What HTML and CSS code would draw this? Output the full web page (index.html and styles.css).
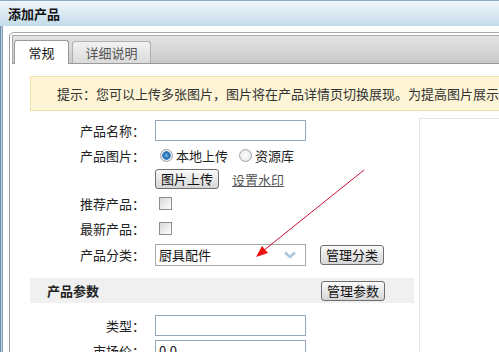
FILE: index.html
```html
<!DOCTYPE html>
<html>
<head>
<meta charset="UTF-8">
    <title>添加产品</title>
    <link rel="stylesheet" href="styles.css">
</head>
<body>
    <div class="dialog">
        <div class="dialog_title">添加产品</div>
        <div class="dialog_body">
            <div class="tabPanel">
                <ul class="tabBar">
                    <li class="tab tab_on">常规</li>
                    <li class="tab">详细说明</li>
                </ul>
                <div class="tabContent">
                    <div class="tip">提示：您可以上传多张图片，图片将在产品详情页切换展现。为提高图片展示效果，建议上传尺寸一致的图片。</div>
                    <div class="main">
                        <div class="form">
                            <div class="row row1">
                                <span class="label">产品名称：</span>
                                <span class="field"><input type="text" class="txt" /></span>
                            </div>
                            <div class="row row2">
                                <span class="label">产品图片：</span>
                                <span class="field">
                                    <i class="radio radio_on"></i><span class="opt">本地上传</span>
                                    <i class="radio"></i><span class="opt">资源库</span>
                                </span>
                            </div>
                            <div class="row row3">
                                <span class="label"></span>
                                <span class="field">
                                    <span class="btn">图片上传</span>
                                    <a class="link" href="#">设置水印</a>
                                </span>
                            </div>
                            <div class="row row4">
                                <span class="label">推荐产品：</span>
                                <span class="field"><i class="check"></i></span>
                            </div>
                            <div class="row row5">
                                <span class="label">最新产品：</span>
                                <span class="field"><i class="check"></i></span>
                            </div>
                            <div class="row row6">
                                <span class="label">产品分类：</span>
                                <span class="field">
                                    <span class="select">厨具配件
                                        <svg class="chevron" width="12" height="8" viewBox="0 0 12 8"><path d="M1 1.5 L6 6 L11 1.5" fill="none" stroke="#a8c6de" stroke-width="2.6"/></svg>
                                    </span>
                                    <span class="btn btn_cat">管理分类</span>
                                </span>
                            </div>
                            <div class="section">
                                <span>产品参数</span>
                                <span class="btn">管理参数</span>
                            </div>
                            <div class="row row7">
                                <span class="label">类型：</span>
                                <span class="field"><input type="text" class="txt" /></span>
                            </div>
                            <div class="row row8">
                                <span class="label">市场价：</span>
                                <span class="field"><input type="text" class="txt" value="0.0" /></span>
                            </div>
                        </div>
                        <div class="side"></div>
                    </div>
                </div>
            </div>
        </div>
        <svg class="arrow" width="499" height="352" viewBox="0 0 499 352">
            <line x1="364" y1="170" x2="263" y2="251" stroke="#cc1133" stroke-width="1"/>
            <polygon points="256,257 262,246 268,253" fill="#ee1111"/>
        </svg>
    </div>
</body>
</html>
```

FILE: styles.css
```css
@charset "utf-8";
/* reset */
body, div, ul, li, span, input {padding: 0; margin: 0;}
ul {list-style: none;}
body {
    font: 13px/1 "Noto Sans CJK SC", "DejaVu Sans", sans-serif;
    color: #222;
    background: #fff;
    overflow: hidden;
}

.dialog {
    position: relative;
    width: 760px;
    height: 352px;
    overflow: hidden;
}

.dialog_title {
    height: 25px;
    line-height: 25px;
    padding-left: 8px;
    font-weight: bold;
    color: #111;
    border-top: 1px solid #88abc4;
    background: linear-gradient(#f1f5f9, #c3dcea);
}

.dialog_body {
    height: 330px;
    padding: 6px 0 0 9px;
    box-shadow: inset 1px 0 #6f8ea8, inset 2px 0 #bccfde, inset 3px 0 #86a3bb;
}

.tabPanel {
    height: 320px;
    border-top: 1px solid #a4abb0;
    border-left: 1px solid #9a9a9a;
    border-top-left-radius: 5px;
    padding: 2px 0 0 2px;
}

    .tabBar {
        display: flex;
        align-items: flex-end;
        height: 27px;
        padding-left: 1px;
        border-top: 1px solid #ababab;
        border-left: 1px solid #a8a8a8;
        border-bottom: 1px solid #999;
        background: linear-gradient(#e3e3e3, #c9c9c9);
    }

        .tab {
            width: 77px;
            height: 21px;
            line-height: 21px;
            margin-left: 3px;
            text-align: center;
            color: #555;
            border: 1px solid #b0b0b0;
            border-bottom: 0;
            border-radius: 3px 3px 0 0;
            background: linear-gradient(#f2f2f2, #dadada);
        }

        .tab_on {
            width: 53px;
            height: 23px;
            line-height: 23px;
            margin: 0 0 -1px 0;
            color: #111;
            border-color: #999;
            background: #fff;
        }

.tabContent {
    margin-left: -2px;
    padding-left: 20px;
    background: #fff;
}

.tip {
    margin-top: 12px;
    height: 33px;
    line-height: 33px;
    padding-left: 26px;
    color: #333;
    white-space: nowrap;
    overflow: hidden;
    border: 1px solid #f1e1a6;
    background: #fdf5d6;
}

.main {
    display: flex;
    margin-top: 7px;
}

.form {
    width: 384px;
}

    .row {
        display: flex;
        align-items: center;
        height: 25px;
    }

    .row2, .row3, .row5 { height: 24px; }
    .row6 { height: 29px; }
    .row7 { height: 26px; margin-top: 9px; }

    .label {
        width: 115px;
        text-align: right;
    }

    .field {
        display: flex;
        align-items: center;
        margin-left: 10px;
    }

    .txt {
        box-sizing: border-box;
        width: 151px;
        height: 21px;
        padding: 0 3px;
        border: 1px solid #93a6ba;
        font: 13px "Noto Sans CJK SC", "DejaVu Sans", sans-serif;
        color: #111;
        outline: none;
    }

    .radio {
        box-sizing: border-box;
        width: 13px;
        height: 13px;
        margin: 0 3px 0 5px;
        border: 1px solid #9aa3ac;
        border-radius: 50%;
        background: radial-gradient(circle, #fff 0, #ececec 5px, #d6d6d6 7px);
    }

    .radio_on {
        background: radial-gradient(circle, #7cc0ee 0, #1f6cb4 3px, #4a86bd 4px, #f4f4f4 4.6px, #dcdcdc 7px);
    }

    .opt {
        margin-right: 6px;
    }

    .btn {
        display: inline-block;
        box-sizing: border-box;
        height: 20px;
        line-height: 18px;
        padding: 0 5px;
        color: #111;
        border: 1px solid #6e6e6e;
        border-radius: 3px;
        background: linear-gradient(#fafafa, #d6d6d6);
    }

    .btn_cat {
        margin-left: 14px;
    }

    .link {
        margin-left: 13px;
        color: #555;
    }

    .check {
        box-sizing: border-box;
        width: 13px;
        height: 13px;
        margin-left: 4px;
        border: 1px solid #8e8e8e;
        background: linear-gradient(135deg, #d8d8d8, #fff);
    }

    .select {
        display: flex;
        align-items: center;
        justify-content: space-between;
        box-sizing: border-box;
        width: 151px;
        height: 22px;
        padding: 0 9px 0 3px;
        border: 1px solid #a9a9a9;
        color: #111;
    }

    .section {
        display: flex;
        align-items: center;
        justify-content: space-between;
        height: 25px;
        margin-top: 9px;
        padding: 0 29px 0 17px;
        font-weight: bold;
        background: #f0f0f0;
    }

        .section .btn {
            font-weight: normal;
        }

.side {
    flex: 1;
    margin-left: 5px;
    min-height: 260px;
    border-top: 1px solid #e6e6e6;
    border-left: 1px solid #e6e6e6;
}

.arrow {
    position: absolute;
    left: 0;
    top: 0;
    pointer-events: none;
}
```
